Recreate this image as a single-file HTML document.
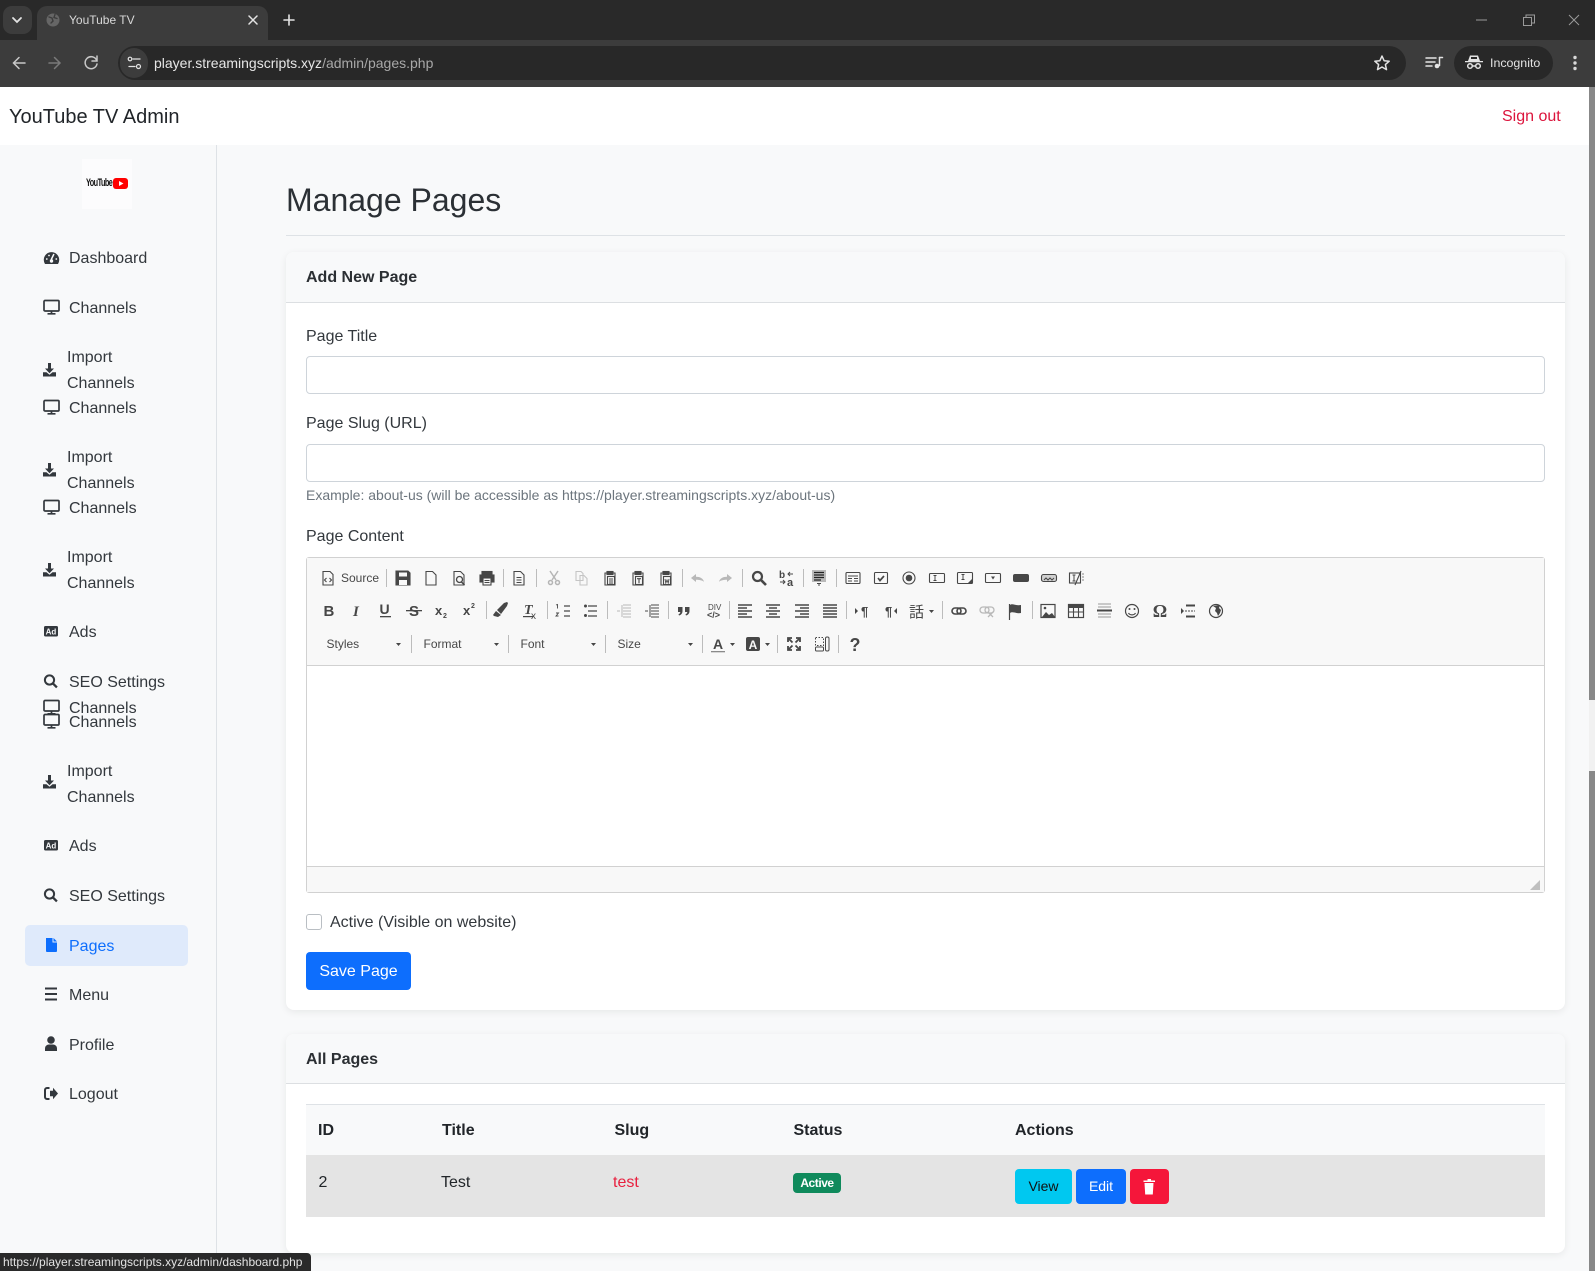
<!DOCTYPE html>
<html lang="en"><head><meta charset="utf-8"><title>Manage Pages</title>
<style>
*{box-sizing:border-box}
html,body{margin:0;padding:0;width:1595px;height:1271px;overflow:hidden;background:#f8f9fa;font-family:"Liberation Sans",Arial,sans-serif;color:#212529}
.b{position:absolute}
.t{position:absolute;white-space:nowrap;line-height:24px;font-size:16px}
.s{color:#33383d}
.ov{position:absolute;left:0;top:0;width:1595px;height:1271px}
.c{position:absolute;background:#fff;border-radius:8px;box-shadow:0 2px 8px rgba(0,0,0,.07)}
.i{position:absolute;left:306px;width:1239px;height:38px;background:#fff;border:1px solid #ced4da;border-radius:4px}
.h{position:absolute;font-weight:700;white-space:nowrap;line-height:24px;font-size:16px}
.btn{position:absolute;border-radius:4px;color:#fff;text-align:center;white-space:nowrap}
</style></head><body>
<!-- browser chrome -->
<div class="b" style="left:0;top:0;width:1595px;height:40px;background:#292929"></div>
<div class="b" style="left:3px;top:6px;width:29px;height:28px;background:#3c3c3c;border-radius:9px"></div>
<div class="b" style="left:37px;top:6px;width:231px;height:36px;background:#3c3c3c;border-radius:10px 10px 0 0"></div>
<div class="b" style="left:0;top:40px;width:1595px;height:47px;background:#3c3c3c"></div>
<div class="b" style="left:118px;top:46px;width:1288px;height:34px;background:#282828;border-radius:17px"></div>
<div class="b" style="left:120px;top:48px;width:28px;height:30px;background:#3c3c3c;border-radius:15px"></div>
<div class="b" style="left:1454px;top:46px;width:99px;height:34px;background:#282828;border-radius:17px"></div>
<div class="t" style="left:69px;top:8px;font-size:12px;color:#d8d8d8">YouTube TV</div>
<div class="t" style="left:154px;top:51px;font-size:14px;color:#e6e6e6">player.streamingscripts.xyz<span style="color:#a8a8a8">/admin/pages.php</span></div>
<div class="t" style="left:1490px;top:51px;font-size:12.4px;color:#e3e3e3">Incognito</div>
<!-- navbar -->
<div class="b" style="left:0;top:87px;width:1595px;height:58px;background:#fff"></div>
<div class="t" style="left:9px;top:105px;font-size:20px;color:#212529">YouTube TV Admin</div>
<div class="t" style="left:1502px;top:105px;color:#dc143c">Sign out</div>
<!-- sidebar -->
<div class="b" style="left:216px;top:145px;width:1px;height:1126px;background:#dee2e6"></div>
<div class="b" style="left:82px;top:159px;width:50px;height:50px;background:#fcfcfd"></div>
<div class="t" style="left:86px;top:171px;font-size:11px;font-weight:700;letter-spacing:-.8px;color:#111;transform:scaleX(.66);transform-origin:left">YouTube</div>
<div class="b" style="left:113px;top:178px;width:15px;height:11px;background:#f00;border-radius:3px"></div>
<div class="b" style="left:25px;top:925px;width:163px;height:41px;background:#dfeafb;border-radius:5px"></div>
<div class="t s" style="left:69px;top:247px">Dashboard</div>
<div class="t s" style="left:69px;top:297px">Channels</div>
<div class="t s" style="left:67px;top:346px">Import</div>
<div class="t s" style="left:67px;top:372px">Channels</div>
<div class="t s" style="left:69px;top:397px">Channels</div>
<div class="t s" style="left:67px;top:446px">Import</div>
<div class="t s" style="left:67px;top:472px">Channels</div>
<div class="t s" style="left:69px;top:497px">Channels</div>
<div class="t s" style="left:67px;top:546px">Import</div>
<div class="t s" style="left:67px;top:572px">Channels</div>
<div class="t s" style="left:69px;top:621px">Ads</div>
<div class="t s" style="left:69px;top:671px">SEO Settings</div>
<div class="t s" style="left:69px;top:697px">Channels</div>
<div class="t s" style="left:69px;top:711px">Channels</div>
<div class="t s" style="left:67px;top:760px">Import</div>
<div class="t s" style="left:67px;top:786px">Channels</div>
<div class="t s" style="left:69px;top:835px">Ads</div>
<div class="t s" style="left:69px;top:885px">SEO Settings</div>
<div class="t" style="left:69px;top:935px;color:#0d6efd">Pages</div>
<div class="t s" style="left:69px;top:984px">Menu</div>
<div class="t s" style="left:69px;top:1034px">Profile</div>
<div class="t s" style="left:69px;top:1083px">Logout</div>
<!-- main -->
<div class="t" style="left:286px;top:180px;font-size:32px;line-height:40px;color:#2b3035">Manage Pages</div>
<div class="b" style="left:286px;top:235px;width:1279px;height:1px;background:#dee2e6"></div>
<div class="c" style="left:286px;top:252px;width:1279px;height:758px"></div>
<div class="b" style="left:286px;top:252px;width:1279px;height:51px;background:#f8f9fa;border-bottom:1px solid #dcdfe2;border-radius:8px 8px 0 0"></div>
<div class="h" style="left:306px;top:266px;color:#2b2f33">Add New Page</div>
<div class="t s" style="left:306px;top:325px">Page Title</div>
<div class="i" style="top:356px"></div>
<div class="t s" style="left:306px;top:412px">Page Slug (URL)</div>
<div class="i" style="top:444px"></div>
<div class="t" style="left:306px;top:483px;font-size:14px;color:#6c757d">Example: about-us (will be accessible as https://player.streamingscripts.xyz/about-us)</div>
<div class="t s" style="left:306px;top:525px">Page Content</div>
<!-- editor -->
<div class="b" style="left:306px;top:557px;width:1239px;height:336px;background:#fff;border:1px solid #d1d1d1;border-radius:3px"></div>
<div class="b" style="left:307px;top:558px;width:1237px;height:108px;background:#f8f8f8;border-bottom:1px solid #d1d1d1"></div>
<div class="b" style="left:307px;top:866px;width:1237px;height:26px;background:#f8f8f8;border-top:1px solid #d1d1d1"></div>
<div class="b" style="left:306px;top:914px;width:16px;height:16px;background:#fff;border:1px solid #b9bec3;border-radius:3px"></div>
<div class="t s" style="left:330px;top:911px">Active (Visible on website)</div>
<div class="btn" style="left:306px;top:952px;width:105px;height:38px;background:#0d6efd;font-size:16px;line-height:40px">Save Page</div>
<!-- card 2 -->
<div class="c" style="left:286px;top:1034px;width:1279px;height:219px"></div>
<div class="b" style="left:286px;top:1034px;width:1279px;height:50px;background:#f8f9fa;border-bottom:1px solid #dcdfe2;border-radius:8px 8px 0 0"></div>
<div class="h" style="left:306px;top:1048px;color:#2b2f33">All Pages</div>
<div class="b" style="left:306px;top:1104px;width:1239px;height:51px;background:#f8f9fa;border-top:1px solid #dee2e6"></div>
<div class="b" style="left:306px;top:1155px;width:1239px;height:62px;background:#e4e4e4"></div>
<div class="h" style="left:318px;top:1119px;color:#212529">ID</div>
<div class="h" style="left:442px;top:1119px;color:#212529">Title</div>
<div class="h" style="left:614.500px;top:1119px;color:#212529">Slug</div>
<div class="h" style="left:793.500px;top:1119px;color:#212529">Status</div>
<div class="h" style="left:1015px;top:1119px;color:#212529">Actions</div>
<div class="t" style="left:318.500px;top:1171px">2</div>
<div class="t" style="left:441px;top:1171px">Test</div>
<div class="t" style="left:613px;top:1171px;color:#e8203f">test</div>
<div class="btn" style="left:793px;top:1173px;width:48px;height:20px;background:#0f8a5c;font-size:12px;line-height:20px;font-weight:700;border-radius:4px;letter-spacing:-.45px">Active</div>
<div class="btn" style="left:1015px;top:1169px;width:57px;height:35px;background:#00c8f0;color:#111;font-size:14px;line-height:35px">View</div>
<div class="btn" style="left:1076px;top:1169px;width:50px;height:35px;background:#0d6efd;font-size:14px;line-height:35px">Edit</div>
<div class="btn" style="left:1130px;top:1169px;width:39px;height:35px;background:#f5163a"></div>
<!-- scrollbar -->
<div class="b" style="left:1589px;top:87px;width:6px;height:1184px;background:#f1f1f1"></div>
<div class="b" style="left:1589px;top:87px;width:6px;height:613px;background:#888"></div>
<div class="b" style="left:1589px;top:771px;width:6px;height:500px;background:#888"></div>
<!-- status bar -->
<div class="b" style="left:0;top:1253px;width:311px;height:18px;background:#2a2a2a;border-radius:0 4px 0 0"></div>
<div class="t" style="left:3px;top:1254px;font-size:12px;line-height:17px;color:#e3e3e3">https://player.streamingscripts.xyz/admin/dashboard.php</div>

<svg class="ov" viewBox="0 0 1595 1271" xmlns="http://www.w3.org/2000/svg" font-family="Liberation Sans, sans-serif">
<defs>
<g id="dk"><rect x="1" y="1.500" width="15" height="10.500" rx="1" fill="none" stroke="#33383d" stroke-width="1.700"/><path d="M8.500 12v2M4.500 14.800h8" stroke="#33383d" stroke-width="1.700" fill="none"/></g>
<g id="dl"><path d="M5.500 1h3v5.500h3L7 11.200 2.500 6.500h3z" fill="#33383d"/><path d="M.5 10.200h3.500l3 2.500 3-2.500h3.500v4.300H.5z" fill="#33383d"/></g>
<g id="ad"><rect x="0" y="1" width="14" height="10.500" rx="1.500" fill="#33383d"/><text x="7" y="9.400" font-size="8" font-weight="700" fill="#f8f9fa" text-anchor="middle">Ad</text></g>
<g id="se"><circle cx="6" cy="6" r="4.600" fill="none" stroke="#33383d" stroke-width="2"/><path d="M9.400 9.400l4 4" stroke="#33383d" stroke-width="2.300"/></g>
</defs>
<!-- chrome icons -->
<g fill="none" stroke="#e3e3e3" stroke-linecap="round">
<path d="M13 18l4 4 4-4" stroke-width="1.800"/>
<circle cx="53" cy="20" r="6.500" fill="#666" stroke="none"/><path d="M49 17l3 1 1 3-2 2M55 14.500l-1 3 3 1" stroke="#3c3c3c" stroke-width="1.400"/>
<path d="M249 16l8 8M257 16l-8 8" stroke-width="1.500"/>
<path d="M289 15v10M284 20h10" stroke-width="1.600"/>
<path d="M25 63H14M19 57.500L13.500 63l5.500 5.500" stroke-width="1.500" stroke="#c8c8c8"/>
<path d="M49 63h10M54.500 57.500L60 63l-5.500 5.500" stroke-width="1.500" stroke="#7a7a7a"/>
<path d="M96.500 60a6 6 0 1 0 .5 4" stroke-width="1.500" stroke="#c8c8c8"/><path d="M97 56v5h-5" stroke-width="1.500" stroke="#c8c8c8"/>
<path d="M133 59h7M129 66.500h6" stroke-width="1.300"/><circle cx="130" cy="59" r="1.800" stroke-width="1.200"/><circle cx="138.500" cy="66.500" r="2" stroke-width="1.200"/>
<path d="M1382 56l2.100 4.700 5.100.5-3.800 3.400 1.100 5-4.500-2.600-4.500 2.600 1.100-5-3.800-3.400 5.100-.5z" stroke-width="1.500" stroke-linejoin="round"/>
<path d="M1426 58h10M1426 62h9M1426 66h6M1439.500 57.500v8" stroke-width="1.500"/><path d="M1439.500 57.500h3" stroke-width="1.500"/>
<circle cx="1437" cy="66" r="2.300" fill="#e3e3e3" stroke="none"/>
</g>
<g fill="#e3e3e3" stroke="none"><path d="M1468 61l2-5.500h8l2 5.500h3v1.300h-18V61z"/><rect x="1471" y="57" width="6" height="2" fill="#282828"/></g>
<g fill="none" stroke="#e3e3e3" stroke-width="1.500"><circle cx="1470" cy="66" r="2.300"/><circle cx="1478" cy="66" r="2.300"/><path d="M1472.500 66h3"/></g>
<g fill="#d8d8d8"><circle cx="1575" cy="57.500" r="1.700"/><circle cx="1575" cy="63" r="1.700"/><circle cx="1575" cy="68.500" r="1.700"/></g>
<g fill="none" stroke="#9a9a9a" stroke-width="1"><path d="M1476 20h11"/><rect x="1523.500" y="17.500" width="8" height="8"/><path d="M1526 17.500V15h8.500v8H1531.500"/><path d="M1569 15l10 10M1579 15l-10 10"/></g>
<!-- logo play -->
<path d="M119 181v5l4.500-2.500z" fill="#fff"/>
<!-- sidebar icons -->
<path d="M45 264a7.700 7.700 0 1 1 13 0z" fill="#33383d"/>
<path d="M51.500 259l2.200-4.500" stroke="#f8f9fa" stroke-width="1.500" stroke-linecap="round" fill="none"/>
<circle cx="46.800" cy="259" r=".9" fill="#f8f9fa"/><circle cx="49" cy="255.500" r=".9" fill="#f8f9fa"/><circle cx="56.300" cy="259" r=".9" fill="#f8f9fa"/>
<circle cx="51.500" cy="261" r="1.700" fill="#f8f9fa"/>
<use href="#dk" x="43" y="299"/><use href="#dk" x="43" y="399"/><use href="#dk" x="43" y="499"/><use href="#dk" x="43" y="699"/><use href="#dk" x="43" y="713"/>
<use href="#dl" x="42.500" y="362"/><use href="#dl" x="42.500" y="462"/><use href="#dl" x="42.500" y="562"/><use href="#dl" x="42.500" y="774"/>
<use href="#ad" x="44" y="625"/><use href="#ad" x="44" y="839"/>
<use href="#se" x="43.500" y="674"/><use href="#se" x="43.500" y="888"/>
<path d="M46 938h6.500v4.500H57V951a1 1 0 0 1-1 1H47a1 1 0 0 1-1-1z" fill="#0d6efd"/><path d="M53.500 938v3.500H57z" fill="#0d6efd"/>
<path d="M45 988.500h12M45 994h12M45 999.500h12" stroke="#33383d" stroke-width="2"/>
<circle cx="51" cy="1040" r="3.800" fill="#33383d"/><path d="M45 1051v-2.500c0-2.500 2-4 4-4h4c2 0 4 1.500 4 4v2.500z" fill="#33383d" />
<path d="M49.500 1088H47a2 2 0 0 0-2 2v7a2 2 0 0 0 2 2h2.500" fill="none" stroke="#33383d" stroke-width="2"/><path d="M50 1090.700h3v-3l5 5.800-5 5.800v-3h-3z" fill="#33383d"/>
<!-- trash -->
<path d="M1144.500 1183h9l-.7 11.500h-7.600zM1143.500 1180.500h11.500v1.500h-11.500zM1147.500 1179h3.500v1.500h-3.500z" fill="#fff"/>
<!-- resize grip -->
<path d="M1540 880v10h-10z" fill="#bfbfbf"/>
<!-- toolbar separators -->
<g stroke="#bcbcbc" stroke-width="1">
<path d="M386.500 569v18M503.500 569v18M536.500 569v18M682.500 569v18M742.500 569v18M803.500 569v18M836.500 569v18"/>
<path d="M486.500 601v18M547.500 601v18M607.500 601v18M668.500 601v18M729.500 601v18M846.500 601v18M942.500 601v18M1032.500 601v18"/>
<path d="M411.500 635v18M508.500 635v18M605.500 635v18M702.500 635v18M777.500 635v18M838.500 635v18"/>
</g>
<!-- toolbar row 1 -->
<g fill="none" stroke="#474747" stroke-width="1.100" font-family="Liberation Sans, sans-serif">
<g transform="translate(320,570)"><path d="M3 1.500h7l3 3V15H3z"/><path d="M6.500 8l-2 2 2 2M9.500 8l2 2-2 2" stroke-width="1.100"/></g>
<g transform="translate(395,570)"><path d="M1 1h12l2 2v12H1z" fill="#474747"/><rect x="4" y="2.500" width="8" height="4" fill="#f8f8f8" stroke="none"/><rect x="4" y="10" width="8" height="5" fill="#f8f8f8" stroke="none"/></g>
<g transform="translate(423,570)"><path d="M3 1.500h6.500l3.500 3.500v10H3z"/></g>
<g transform="translate(451,570)"><path d="M3 1.500h6.500l3.500 3.500v10H3z"/><circle cx="8.500" cy="9.500" r="3" stroke-width="1.300"/><path d="M10.500 12l3 3" stroke-width="1.500"/></g>
<g transform="translate(479,570)"><rect x="3" y="1.500" width="10" height="3" fill="#474747"/><rect x="1" y="5" width="14" height="7" fill="#474747"/><rect x="4" y="8" width="8" height="7" fill="#f8f8f8"/><path d="M5.500 10.500h5M5.500 12.500h5" stroke-width="1"/></g>
<g transform="translate(511,570)"><path d="M3 1.500h6.500l3.500 3.500v10H3z"/><path d="M5.500 7.500h5M5.500 10h5M5.500 12.500h5" stroke-width="1"/></g>
<g transform="translate(546,570)" stroke="#b5b5b5" stroke-width="1.500"><path d="M4 1l6 9M12 1l-6 9"/><circle cx="4.500" cy="12.500" r="2"/><circle cx="11.500" cy="12.500" r="2"/></g>
<g transform="translate(573,570)" stroke="#c5c5c5"><path d="M3 1.500h5l2 2v7H3z"/><path d="M7 5.500h4l3 3v6.500H7z"/></g>
<g transform="translate(602,570)"><path d="M5 3H3v12h10V3h-2"/><rect x="5" y="1.500" width="6" height="3" fill="#474747"/><rect x="5.500" y="6.500" width="7" height="8" fill="#f8f8f8"/><path d="M7 9h4M7 11h4M7 13h4" stroke-width="1"/></g>
<g transform="translate(630,570)"><path d="M5 3H3v12h10V3h-2"/><rect x="5" y="1.500" width="6" height="3" fill="#474747"/><rect x="5.500" y="6.500" width="7" height="8" fill="#f8f8f8"/><path d="M7 8.700h4M9 8.700v4.500" stroke-width="1.100"/></g>
<g transform="translate(658,570)"><path d="M5 3H3v12h10V3h-2"/><rect x="5" y="1.500" width="6" height="3" fill="#474747"/><rect x="5.500" y="6.500" width="7" height="8" fill="#f8f8f8"/><path d="M7 9l.8 4L9 10l1.200 3 .8-4" stroke-width=".9"/></g>
<g transform="translate(690,570)" fill="#b8b8b8" stroke="none"><path d="M1 8l5-4v2.700c4 0 7 1.500 8 5-2-1.500-4.500-2-8-2V12z"/></g>
<g transform="translate(717,570)" fill="#b8b8b8" stroke="none"><path d="M15 8l-5-4v2.700c-4 0-7 1.500-8 5 2-1.500 4.500-2 8-2V12z"/></g>
<g transform="translate(751,570)" stroke-width="2.200"><circle cx="6.500" cy="6.500" r="4.500"/><path d="M10 10l5 5" stroke-width="2.600"/></g>
<g transform="translate(779,570)"><text x="0" y="8" font-size="10" font-weight="700" fill="#474747" stroke="none">b</text><text x="8" y="16" font-size="11" font-weight="700" fill="#474747" stroke="none">a</text><path d="M9 4h5M11 2L9 4l2 2M1 12h5M4 10l2 2-2 2" stroke-width="1"/></g>
<g transform="translate(811,570)"><rect x="1" y="0" width="14" height="12" fill="#b9b9b9" stroke="none"/><path d="M3 2.500h10M3 5h10M3 7.500h10M3 10h7" stroke-width="1.300" stroke="#222"/><path d="M6 13.500h4M8 13.500v2.500" stroke-width="1"/></g>
<g transform="translate(845,570)"><rect x="1" y="2.500" width="14" height="11" rx="1"/><path d="M3 6h10M3 8.500h4M9 8.500h4M3 11h4M9 11h4" stroke-width="1.100"/></g>
<g transform="translate(873,570)"><rect x="1.500" y="2.500" width="13" height="11" rx="1"/><path d="M5 8l2 2.500 4-4.500" stroke-width="1.700"/></g>
<g transform="translate(901,570)"><circle cx="8" cy="8" r="6"/><circle cx="8" cy="8" r="3.300" fill="#474747" stroke="none"/></g>
<g transform="translate(929,570)"><rect x=".5" y="3.500" width="15" height="9" rx="1"/><path d="M4.500 5.500h3M6 5.500v5M4.500 10.500h3" stroke-width="1"/></g>
<g transform="translate(957,570)"><rect x=".5" y="2.500" width="15" height="11" rx="1"/><path d="M4.500 4.500h3M6 4.500v5M4.500 9.500h3" stroke-width="1"/><path d="M11 13l4-4v4z" fill="#474747" stroke="none"/></g>
<g transform="translate(985,570)"><rect x=".5" y="3.500" width="15" height="9" rx="1"/><path d="M6 6.500h4l-2 3z" fill="#474747" stroke="none"/></g>
<g transform="translate(1013,570)"><rect x="0" y="4" width="16" height="8" rx="2" fill="#474747" stroke="none"/></g>
<g transform="translate(1041,570)"><rect x=".5" y="4.500" width="15" height="7" rx="2" fill="#d0d0d0"/><path d="M3 10l2-2 2 2 2-2 2 2 2-2" stroke-width="1"/></g>
<g transform="translate(1069,570)"><rect x=".5" y="3" width="11" height="10"/><path d="M3.500 5h3M5 5v6M3.500 11h3" stroke-width="1"/><path d="M12 1L6 15" stroke-width="1.100"/><path d="M13 4h2M13 7h2M13 10h2" stroke-width="1" stroke="#888"/></g>
</g>
<text x="341" y="582" font-size="12" fill="#474747">Source</text>
<!-- toolbar row 2 -->
<g fill="#474747" font-weight="700">
<text x="323.500" y="616" font-size="15">B</text>
<text x="353" y="616" font-size="15" font-style="italic" font-family="Liberation Serif, serif">I</text>
<text x="379.500" y="614" font-size="14">U</text><rect x="380" y="616" width="11" height="1.300"/>
<text x="409" y="616" font-size="15">S</text><rect x="406" y="610" width="16" height="1.300"/>
<text x="435" y="615" font-size="13">x</text><text x="443" y="618" font-size="7">2</text>
<text x="463" y="615" font-size="13">x</text><text x="471" y="608" font-size="7">2</text>
<text x="524" y="614" font-size="14" font-style="italic" font-family="Liberation Serif, serif">T</text><rect x="523" y="616" width="10" height="1.200"/><text x="531" y="619" font-size="10" font-weight="400">x</text>
<text x="708" y="610" font-size="8" font-weight="400">DIV</text><text x="707" y="618" font-size="9" font-weight="700">&lt;/&gt;</text>
<text x="861" y="616" font-size="13" font-weight="700">¶</text><text x="885" y="616" font-size="13" font-weight="700">¶</text>
<text x="909" y="617" font-size="15" font-weight="400" font-family="Noto Sans CJK JP, sans-serif">話</text>
<text x="1160" y="617" font-size="18" text-anchor="middle" font-family="Liberation Serif, serif">Ω</text>
</g>
<!-- blockquote marks -->
<path d="M678 607h4.500v4c0 2.500-1.500 4-3.500 4.500l-.5-1.200c1.200-.5 1.700-1.300 1.800-2.300H678zM685 607h4.500v4c0 2.500-1.500 4-3.500 4.500l-.5-1.200c1.200-.5 1.700-1.300 1.800-2.300H685z" fill="#474747"/>
<g transform="translate(0,1)">
<g fill="#474747"><path d="M855 607v6l3-3zM897 607v6l-3-3zM929 609h5l-2.500 3z"/></g>
<g fill="none" stroke="#474747">
<!-- brush -->
<path d="M497 609l4 4 6-8 1-3-1-1-3 1z" fill="#474747" stroke="none"/><path d="M496 610l5 4-3 2-4-1-1-1z" fill="#474747" stroke="none"/>
<!-- lists -->
<path d="M564 605h6M564 610h6M564 615h6" stroke-width="1.200"/><path d="M556 604l1.500-.5v4M556 612h2.500l-2.500 3h2.500" stroke-width=".9"/>
<path d="M588 605h9M588 610h9M588 615h9" stroke-width="1.200"/><circle cx="585.500" cy="605" r="1.500" fill="#474747" stroke="none"/><circle cx="585.500" cy="614.500" r="1.500" fill="#474747" stroke="none"/>
<!-- indent -->
<g stroke="#b9b9b9"><path d="M623 604h8M623 607h8M623 610h8M623 613h8M623 616h8M622 604v12"/><path d="M620 610h-3"/></g>
<path d="M651 604h8M651 607h8M651 610h8M651 613h8M651 616h8M650 604v12"/><path d="M645 610h3"/>
<!-- align -->
<path d="M738 604h14M738 607h9M738 610h14M738 613h9M738 616h14" stroke-width="1.500"/>
<path d="M766 604h14M769 607h8M766 610h14M769 613h8M766 616h14" stroke-width="1.500"/>
<path d="M795 604h14M800 607h9M795 610h14M800 613h9M795 616h14" stroke-width="1.500"/>
<path d="M823 604h14M823 607h14M823 610h14M823 613h14M823 616h14" stroke-width="1.500"/>
<!-- link -->
<g stroke-width="1.600"><rect x="952" y="607" width="9" height="6" rx="3"/><rect x="957" y="607" width="9" height="6" rx="3"/></g>
<g stroke="#b9b9b9" stroke-width="1.300"><rect x="980" y="606" width="9" height="6" rx="3"/><rect x="985" y="606" width="9" height="6" rx="3"/><path d="M988 611l5 5M993 611l-5 5"/></g>
<!-- flag -->
<path d="M1009.500 603v16" stroke-width="1.200"/><path d="M1010 604c3-2 5 1 11 0v8c-5 1-8-2-11 0z" fill="#474747" stroke="none"/>
<!-- image -->
<rect x="1041" y="603.500" width="14" height="13" stroke-width="1.200"/><path d="M1042 616l4-5 3 3 3-2 3 4z" fill="#474747" stroke="none"/><circle cx="1045" cy="607" r="1.300" fill="#474747" stroke="none"/>
<!-- table -->
<rect x="1068.500" y="603.500" width="15" height="13" stroke-width="1.200"/><rect x="1068.500" y="603.500" width="15" height="3" fill="#474747" stroke-width="1"/><path d="M1068.500 611h15M1073.500 606v10M1078.500 606v10" stroke-width="1.100"/>
<!-- hr -->
<path d="M1098 603h13M1098 606h13M1098 613h13M1098 616h13" stroke="#9a9a9a"/><path d="M1097 609.500h15" stroke-width="2"/>
<!-- smiley -->
<circle cx="1132" cy="610" r="6.500" stroke-width="1.200"/><circle cx="1129.500" cy="608" r="1" fill="#474747" stroke="none"/><circle cx="1134.500" cy="608" r="1" fill="#474747" stroke="none"/><path d="M1128.500 612c1.500 2.500 5.500 2.500 7 0" stroke-width="1.200"/>
<!-- pagebreak -->
<path d="M1181 607v6l3-3z" fill="#474747" stroke="none"/><path d="M1186 604.500h9M1186 615.500h9" stroke-width="2"/><path d="M1185 610h10" stroke-width="1" stroke-dasharray="2 1"/>
<!-- iframe globe -->
<circle cx="1216" cy="610" r="6.500" stroke-width="1.200"/><path d="M1213 605l3 2-1 3 2 2 1 3 2-3 1-3-2-2 1-3z" fill="#474747" stroke="none"/>
</g>
</g>
<!-- toolbar row 3 -->
<g font-size="12" fill="#474747"><text x="326.500" y="648">Styles</text><text x="423.500" y="648">Format</text><text x="520.500" y="648">Font</text><text x="617.500" y="648">Size</text>
<text x="718" y="649" font-size="14" font-weight="700" text-anchor="middle">A</text><rect x="711" y="651" width="14" height="1.300" fill="#8a8a8a"/>
<rect x="746" y="637" width="14" height="14" rx="2"/><text x="753" y="649" font-size="12" font-weight="700" fill="#f8f8f8" text-anchor="middle">A</text>
<text x="855" y="651" font-size="18" font-weight="700" text-anchor="middle">?</text>
<path d="M396 643h5l-2.500 3zM494 643h5l-2.500 3zM591 643h5l-2.500 3zM688 643h5l-2.500 3zM730 643h5l-2.500 3zM765 643h5l-2.500 3z"/></g>
<g fill="none" stroke="#474747" stroke-width="1.800"><path d="M788 642v-4h4M800 642v-4h-4M788 646v4h4M800 646v4h-4M789 639l3.500 3.500M799 639l-3.500 3.500M789 649l3.500-3.500M799 649l-3.500-3.500"/></g>
<g fill="none" stroke="#474747" stroke-width="1"><path d="M815.500 637.500h8v8h-8z" stroke-dasharray="1.500 1.500"/><rect x="815.500" y="647" width="8" height="4" rx="1"/><rect x="825.500" y="637" width="3.500" height="14" rx="1.500"/></g>
</svg>
</body></html>
